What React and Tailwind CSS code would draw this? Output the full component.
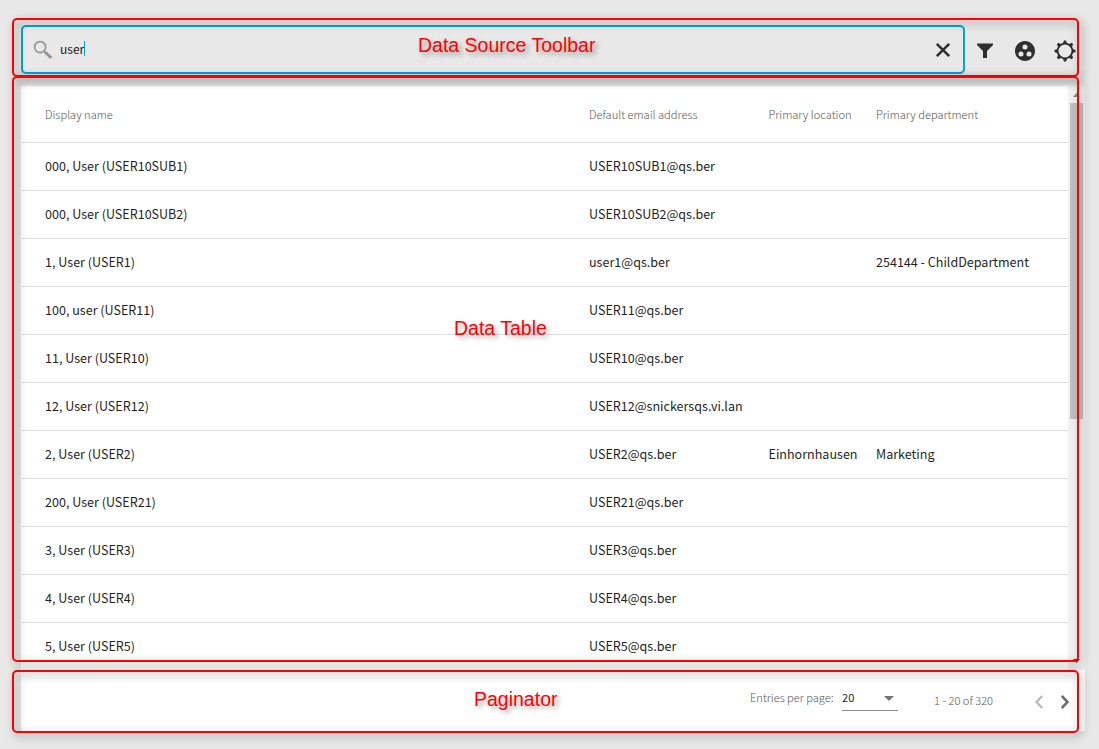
import React from "react";
import { MdGroupWork } from "react-icons/md";

const rows = [
  ["000, User (USER10SUB1)", "USER10SUB1@qs.ber", "", ""],
  ["000, User (USER10SUB2)", "USER10SUB2@qs.ber", "", ""],
  ["1, User (USER1)", "user1@qs.ber", "", "254144 - ChildDepartment"],
  ["100, user (USER11)", "USER11@qs.ber", "", ""],
  ["11, User (USER10)", "USER10@qs.ber", "", ""],
  ["12, User (USER12)", "USER12@snickersqs.vi.lan", "", ""],
  ["2, User (USER2)", "USER2@qs.ber", "Einhornhausen", "Marketing"],
  ["200, User (USER21)", "USER21@qs.ber", "", ""],
  ["3, User (USER3)", "USER3@qs.ber", "", ""],
  ["4, User (USER4)", "USER4@qs.ber", "", ""],
  ["5, User (USER5)", "USER5@qs.ber", "", ""],
];

const columns = "grid grid-cols-[544px_179.5px_107.5px_1fr] items-center pl-6 whitespace-nowrap";

function SearchIcon() {
  return (
    <svg className="h-5 w-5 shrink-0" viewBox="0 0 20 20" fill="none" stroke="#949494">
      <circle cx="7.1" cy="7.1" r="5.5" strokeWidth="1.7" />
      <path d="M11 11 L13 13" strokeWidth="1.6" />
      <path d="M12 12 L18.3 18" strokeWidth="3" />
    </svg>
  );
}

function GearIcon() {
  const teeth = [0, 45, 90, 135, 180, 225, 270, 315];
  return (
    <svg className="h-6 w-6 shrink-0" viewBox="0 0 24 24" fill="#2f2f2f">
      <circle cx="12" cy="12" r="7.4" fill="none" stroke="#2f2f2f" strokeWidth="1.8" />
      {teeth.map((a) => (
        <path key={a} d="M9.8 4.6 L11 1.5 H13 L14.2 4.6 Z" transform={`rotate(${a} 12 12)`} />
      ))}
    </svg>
  );
}

function Toolbar() {
  return (
    <div className="flex h-[49px] w-[1056px] items-center">
      <div className="flex h-[49px] w-[944px] shrink-0 items-center rounded-[5px] border-2 border-[#04a5d6] pl-[10px] pr-[12px]">
        <SearchIcon />
        <span className="-mt-[2px] ml-[7px] text-[12px] leading-5 text-[#222]">user</span>
        <span className="-mt-[2px] h-[15px] w-px bg-[#04a5d6]" />
        <svg className="ml-auto h-4 w-4" viewBox="0 0 16 16" stroke="#2f2f2f" strokeWidth="2.6">
          <path d="M1.8 1.8 L14.2 14.2 M14.2 1.8 L1.8 14.2" />
        </svg>
      </div>
      <svg className="ml-3 mt-[2px] h-4 w-4 shrink-0" viewBox="0 0 16 16" fill="#2f2f2f">
        <path d="M0 0.5 H16 V2 L10 8 V15 H6 V8 L0 2 Z" />
      </svg>
      <MdGroupWork className="ml-5 mt-[2px] h-6 w-6 shrink-0 text-[#2f2f2f]" />
      <div className="ml-4 mt-[2px] flex">
        <GearIcon />
      </div>
    </div>
  );
}

function Table() {
  return (
    <div className="flex h-[584px] overflow-hidden bg-white">
      <div className="w-[1047px] shrink-0 overflow-hidden">
        <div className={`${columns} h-[57px] border-b border-[#dedede] text-[11.15px] font-light text-[#555]`}>
          <span>Display name</span>
          <span>Default email address</span>
          <span>Primary location</span>
          <span>Primary department</span>
        </div>
        {rows.map((r) => (
          <div key={r[0]} className={`${columns} h-12 border-b border-[#dedede] text-[12.55px] text-[#1f1f1f]`}>
            {r.map((c, i) => (
              <span key={i}>{c}</span>
            ))}
          </div>
        ))}
      </div>
      <div className="flex w-[17px] flex-col items-center bg-[#f1f1f1]">
        <div className="flex h-[17px] items-center">
          <svg className="h-1 w-[7px]" viewBox="0 0 7 4" fill="#8a8a8a">
            <path d="M0 4 L3.5 0 L7 4 Z" />
          </svg>
        </div>
        <div className="h-[316px] w-[13px] bg-[#c1c1c1]" />
        <svg className="mb-[7px] mt-auto h-1 w-[7px]" viewBox="0 0 7 4" fill="#444">
          <path d="M0 0 L3.5 4 L7 0 Z" />
        </svg>
      </div>
    </div>
  );
}

function Paginator() {
  return (
    <div className="flex h-[61px] items-start bg-white text-[11.1px] font-light text-[#555]">
      <span className="ml-[729px] mt-[17px] w-[84px] whitespace-nowrap leading-5">Entries per page:</span>
      <div className="ml-2 mt-[17px] flex h-6 w-14 items-start justify-between border-b border-[#8c8c8c] pr-1">
        <span className="font-normal leading-5 text-[#1f1f1f]">20</span>
        <svg className="mt-[9px] h-[5px] w-[10px]" viewBox="0 0 10 5" fill="#757575">
          <path d="M0 0 H10 L5 5 Z" />
        </svg>
      </div>
      <span className="ml-9 mt-5 leading-5">1 - 20 of 320</span>
      <div className="ml-auto mr-4 mt-[25px] flex gap-[18px]">
        <svg className="h-[14px] w-2" viewBox="0 0 8 14" fill="none" strokeWidth="2.3" stroke="#b9b9b9">
          <path d="M7.2 1 L1.5 7 L7.2 13" />
        </svg>
        <svg className="h-[14px] w-2" viewBox="0 0 8 14" fill="none" strokeWidth="2.6" stroke="#6d6d6d">
          <path d="M0.8 1 L6.5 7 L0.8 13" />
        </svg>
      </div>
    </div>
  );
}

const frame = "absolute left-[12px] w-[1067px] rounded-[5px] border-2 border-[#ff0000] drop-shadow-[3px_3px_4px_rgba(0,0,0,0.5)]";
const label =
  "absolute font-['Liberation_Sans',sans-serif] text-[19.5px] leading-6 text-[#ff0000] whitespace-nowrap [text-shadow:3px_3px_5px_rgba(0,0,0,0.35)]";

export default function App() {
  return (
    <div className="relative h-[749px] w-[1099px] overflow-hidden bg-[#e8e8e8] pl-[21px] pt-[25px] font-['Noto_Sans_CJK_SC',sans-serif]">
      <Toolbar />
      <div className="mt-3 w-[1064px]">
        <Table />
        <Paginator />
      </div>
      <div className={`${frame} top-[18px] h-[59px]`} />
      <div className={`${frame} top-[76px] h-[586px]`} />
      <div className={`${frame} top-[670px] h-[63px]`} />
      <span className={`${label} left-[418px] top-[33px]`}>Data Source Toolbar</span>
      <span className={`${label} left-[454px] top-[316px]`}>Data Table</span>
      <span className={`${label} left-[474px] top-[687px]`}>Paginator</span>
    </div>
  );
}
